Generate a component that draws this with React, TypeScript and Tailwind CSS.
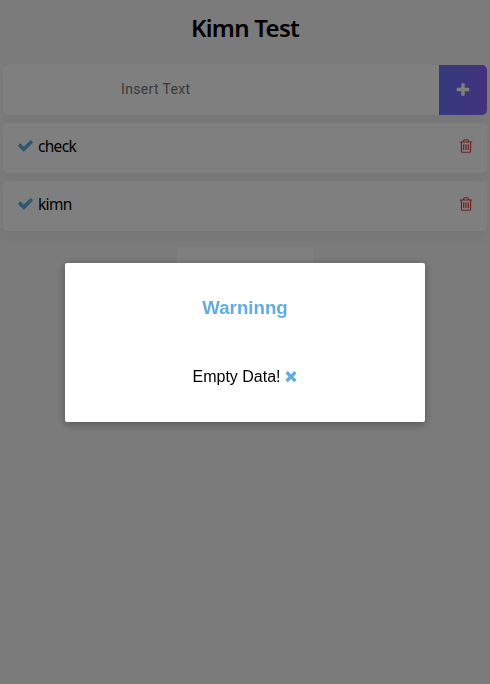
import { useState } from "react";

interface IconProps {
    className?: string;
}

const CheckIcon = ({ className }: IconProps) => (
    <svg viewBox="0 0 1792 1792" fill="currentColor" className={className}>
        <path d="M1671 566q0 40-28 68l-724 724-136 136q-28 28-68 28t-68-28l-136-136-362-362q-28-28-28-68t28-68l136-136q28-28 68-28t68 28l294 295 656-657q28-28 68-28t68 28l136 136q28 28 28 68z" />
    </svg>
);

const PlusIcon = ({ className }: IconProps) => (
    <svg viewBox="0 0 1792 1792" fill="currentColor" className={className}>
        <path d="M1600 736v192q0 40-28 68t-68 28h-416v416q0 40-28 68t-68 28h-192q-40 0-68-28t-28-68v-416h-416q-40 0-68-28t-28-68v-192q0-40 28-68t68-28h416v-416q0-40 28-68t68-28h192q40 0 68 28t28 68v416h416q40 0 68 28t28 68z" />
    </svg>
);

const CloseIcon = ({ className }: IconProps) => (
    <svg viewBox="0 0 1792 1792" fill="currentColor" className={className}>
        <path d="M1490 1322q0 40-28 68l-136 136q-28 28-68 28t-68-28l-294-294-294 294q-28 28-68 28t-68-28l-136-136q-28-28-28-68t28-68l294-294-294-294q-28-28-28-68t28-68l136-136q28-28 68-28t68 28l294 294 294-294q28-28 68-28t68 28l136 136q28 28 28 68t-28 68l-294 294 294 294q28 28 28 68z" />
    </svg>
);

const TrashIcon = ({ className }: IconProps) => (
    <svg viewBox="0 0 1792 1792" fill="currentColor" className={className}>
        <path d="M704 736v576q0 14-9 23t-23 9h-64q-14 0-23-9t-9-23v-576q0-14 9-23t23-9h64q14 0 23 9t9 23zm256 0v576q0 14-9 23t-23 9h-64q-14 0-23-9t-9-23v-576q0-14 9-23t23-9h64q14 0 23 9t9 23zm256 0v576q0 14-9 23t-23 9h-64q-14 0-23-9t-9-23v-576q0-14 9-23t23-9h64q14 0 23 9t9 23zm128 724v-948h-896v948q0 22 7 40.500t14.500 27 10.500 8.500h832q3 0 10.500-8.500t14.500-27 7-40.500zm-672-1076h448l-48-117q-7-9-17-11h-317q-10 2-17 11zm928 32v64q0 14-9 23t-23 9h-96v948q0 83-47 143.500t-113 60.500h-832q-66 0-113-58.500t-47-141.500v-952h-96q-14 0-23-9t-9-23v-64q0-14 9-23t23-9h309l70-167q15-37 54-63t79-26h320q40 0 79 26t54 63l70 167h309q14 0 23 9t9 23z" />
    </svg>
);

export default function App() {
    const [todoItems, setTodoItems] = useState(["check", "kimn"]);
    const [newItem, setNewItem] = useState("");
    const [showModal, setShowModal] = useState(true);

    const addItem = () => {
        if (!newItem.trim()) {
            setShowModal(true);
            return;
        }
        setTodoItems([...todoItems, newItem]);
        setNewItem("");
    };

    const removeItem = (index: number) => {
        setTodoItems(todoItems.filter((_, i) => i !== index));
    };

    return (
        <div className="min-h-screen overflow-hidden bg-[#f6f6f6] px-[3px] text-center font-['Noto_Sans',sans-serif] text-black">
            <h1 className="pt-[11px] text-[24px] leading-[34px] font-semibold tracking-[-0.7px]">Kimn Test</h1>

            <div className="mt-5 flex h-[50px] rounded-[5px] bg-white shadow-[0_10px_10px_rgba(0,0,0,0.03)]">
                <input
                    className="min-w-0 flex-1 pb-[2px] pl-[118px] font-['Roboto',sans-serif] text-[14px] tracking-[0.35px] outline-none placeholder:text-[#757575]"
                    placeholder="Insert Text"
                    value={newItem}
                    onChange={(e) => setNewItem(e.target.value)}
                />
                <button
                    className="flex w-12 items-center justify-center rounded-r-[5px] bg-linear-to-r from-[#6478fb] to-[#8763fb] text-white"
                    onClick={addItem}
                >
                    <PlusIcon className="size-4" />
                </button>
            </div>

            <ul className="mt-2 flex flex-col gap-2">
                {todoItems.map((item, index) => (
                    <li key={index} className="flex h-[50px] items-center rounded-[5px] bg-white pr-[13px] pl-[14px] shadow-[0_10px_10px_rgba(0,0,0,0.03)]">
                        <CheckIcon className="mr-1 mb-[5px] size-[17px] text-[#62acde]" />
                        <span className="mb-[3px] text-[15.5px] tracking-[-0.7px]">{item}</span>
                        <button className="mb-1 ml-auto text-[#de4343]" onClick={() => removeItem(index)}>
                            <TrashIcon className="size-4" />
                        </button>
                    </li>
                ))}
            </ul>

            <div className="mx-auto mt-4 h-[50px] w-[136px] bg-white" />

            {showModal && (
                <div className="fixed inset-0 flex items-center justify-center bg-black/50">
                    <div className="h-[159px] w-[360px] rounded-[2px] bg-white shadow-[0_2px_8px_rgba(0,0,0,0.33)] font-['Liberation_Sans',sans-serif]">
                        <h3 className="mt-[34px] text-[18.7px] leading-[21px] font-bold text-[#62acde]">Warninng</h3>
                        <div className="mt-[50px] flex items-center justify-center pl-px text-[16px] leading-[18px]">
                            Empty Data!
                            <button className="mb-[2px] ml-[2px] text-[#62acde]" onClick={() => setShowModal(false)}>
                                <CloseIcon className="size-4" />
                            </button>
                        </div>
                    </div>
                </div>
            )}
        </div>
    );
}
